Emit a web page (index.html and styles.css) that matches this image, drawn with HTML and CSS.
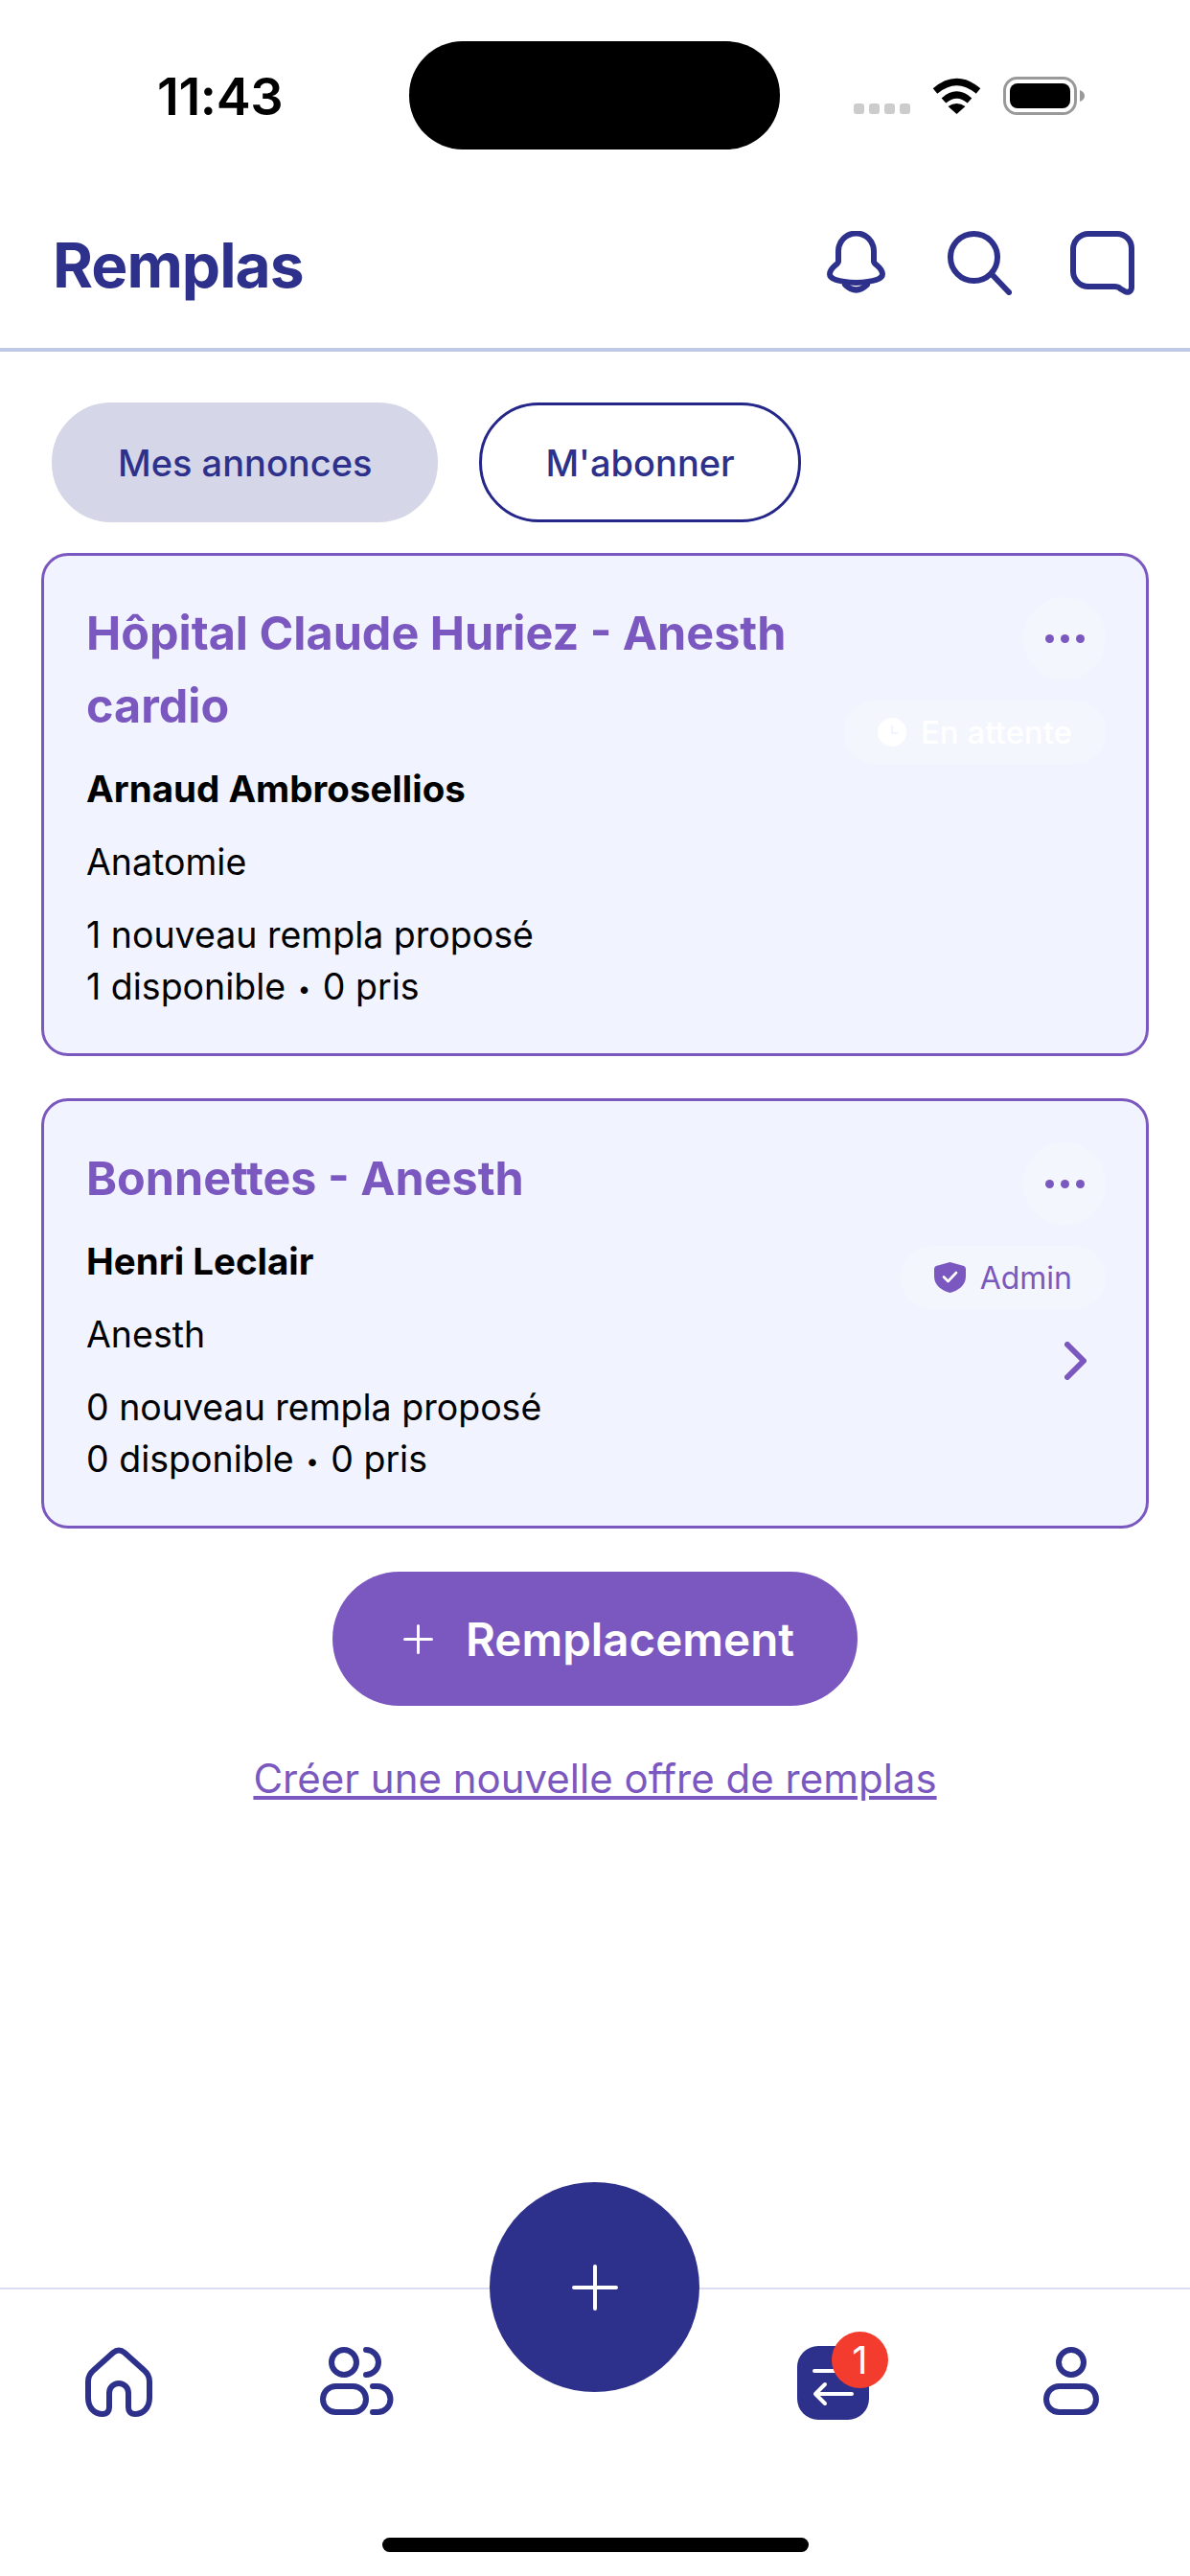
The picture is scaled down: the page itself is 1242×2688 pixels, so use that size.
FILE: index.html

```html
<!DOCTYPE html>
<html lang="fr">
<head>
    <meta charset="UTF-8">
    <meta name="viewport" content="width=device-width, initial-scale=1.0">
    <title>Remplas</title>
    <link rel="stylesheet" href="styles.css">
</head>
<body>

    <div class="statusbar">
        <span class="time">11:43</span>
        <div class="island"></div>
        <div class="signal"><i></i><i></i><i></i><i></i></div>
        <svg class="wifi" width="53" height="38" viewBox="0 0 53 38">
            <path d="M4 14 Q26.5 -5 49 14" fill="none" stroke="#000" stroke-width="7"/>
            <path d="M13 24 Q26.5 12 40 24" fill="none" stroke="#000" stroke-width="7"/>
            <path d="M17.5 30 Q26.5 24 35.5 30 L26.5 38 Z" fill="#000"/>
        </svg>
        <svg class="battery" width="85" height="40" viewBox="0 0 85 40">
            <rect x="1.5" y="1.5" width="74" height="37" rx="13" fill="#fff" stroke="#999" stroke-width="3"/>
            <rect x="7" y="7" width="63" height="26" rx="8" fill="#000"/>
            <path d="M80 14 Q85 16 85 20 Q85 24 80 26 Z" fill="#999"/>
        </svg>
    </div>

    <header class="header">
        <h1>Remplas</h1>
        <div class="header-icons">
            <svg class="bell" width="61" height="67" viewBox="0 0 61 67" fill="none" stroke="#2e318b" stroke-width="6" stroke-linecap="round">
                <path d="M12 32 V21 a18.5 18.5 0 0 1 37 0 V32 C49 35 58 38 58 45 C58 50 50 53 30.5 54 C11 53 3 50 3 45 C3 38 12 35 12 32 Z"/>
                <path d="M19 56 Q30.5 67 42 56"/>
            </svg>
            <svg width="67" height="67" viewBox="0 0 67 67" fill="none" stroke="#2e318b" stroke-width="6" stroke-linecap="round">
                <circle cx="27.5" cy="27.5" r="24.5"/>
                <path d="M46 45 L64 64"/>
            </svg>
            <svg width="67" height="67" viewBox="0 0 67 67" fill="none" stroke="#2e318b" stroke-width="6">
                <path d="M19 3 H49 A15 15 0 0 1 64 18 V59 C64 63 60 65 57 63 L52 60 Q50 58 46 58 H19 A16 16 0 0 1 3 42 V19 A16 16 0 0 1 19 3 Z"/>
            </svg>
        </div>
    </header>

    <div class="tabs">
        <button class="tab tab-active">Mes annonces</button>
        <button class="tab">M'abonner</button>
    </div>

    <div class="cards">
        <div class="card">
            <div class="card-main">
                <h2>Hôpital Claude Huriez - Anesth cardio</h2>
                <p class="name">Arnaud Ambrosellios</p>
                <p class="speciality">Anatomie</p>
                <p class="stats">1 nouveau rempla proposé<br>1 disponible <span class="sep">•</span> 0 pris</p>
            </div>
            <div class="card-side">
                <div class="more"><i></i><i></i><i></i></div>
                <div class="badge badge-pending">
                    <svg width="30" height="30" viewBox="0 0 30 30">
                        <circle cx="15" cy="15" r="15" fill="#fff"/>
                        <path d="M15 8 V16 H21" fill="none" stroke="#f1f4fe" stroke-width="2"/>
                    </svg>
                    En attente
                </div>
            </div>
        </div>

        <div class="card">
            <div class="card-main">
                <h2>Bonnettes - Anesth</h2>
                <p class="name">Henri Leclair</p>
                <p class="speciality">Anesth</p>
                <p class="stats">0 nouveau rempla proposé<br>0 disponible <span class="sep">•</span> 0 pris</p>
            </div>
            <div class="card-side">
                <div class="more"><i></i><i></i><i></i></div>
                <div class="badge">
                    <svg width="33" height="32" viewBox="0 0 33 32">
                        <path d="M16.5 0 L31 4 Q33 5 33 7 V15 C33 24 25 30 16.5 32 C8 30 0 24 0 15 V7 Q0 5 2 4 Z" fill="#7b58bf"/>
                        <path d="M10 15.5 L14.5 20 L23 11" fill="none" stroke="#fff" stroke-width="2.6" stroke-linecap="round" stroke-linejoin="round"/>
                    </svg>
                    Admin
                </div>
                <svg class="chevron" width="23" height="40" viewBox="0 0 23 40" fill="none" stroke="#7b58bf" stroke-width="6" stroke-linecap="round" stroke-linejoin="round">
                    <path d="M3 3 L20 20 L3 37"/>
                </svg>
            </div>
        </div>
    </div>

    <button class="add-btn">
        <svg width="31" height="31" viewBox="0 0 31 31" stroke="#fff" stroke-width="3" stroke-linecap="round">
            <path d="M15.5 1.5 V29.5 M1.5 15.5 H29.5"/>
        </svg>
        Remplacement
    </button>
    <a class="new-offer" href="#">Créer une nouvelle offre de remplas</a>

    <nav class="tabbar">
        <button class="fab">
            <svg width="48" height="48" viewBox="0 0 48 48" stroke="#fff" stroke-width="4" stroke-linecap="round">
                <path d="M24 2 V46 M2 24 H46"/>
            </svg>
        </button>
        <div class="tabbar-row">
            <svg width="70" height="73" viewBox="0 0 70 73" fill="none" stroke="#2e318b" stroke-width="6">
                <path d="M29 6 Q35 1 41 6 L61 24 Q67 29 67 36 V53 C67 64 60 70 52 70 C47 70 45 67 45 63 V48 A10 10 0 0 0 25 48 V63 C25 67 23 70 18 70 C10 70 3 64 3 53 V36 Q3 29 9 24 Z"/>
            </svg>
            <svg width="77" height="71" viewBox="0 0 77 71" fill="none" stroke="#2e318b" stroke-width="6" stroke-linecap="round">
                <circle cx="25" cy="16" r="13"/>
                <path d="M48 3 a13 13 0 0 1 0 26"/>
                <rect x="3" y="41" width="45" height="27" rx="13.5"/>
                <path d="M55 41 H60 a13.5 13.5 0 0 1 0 27 H55"/>
            </svg>
            <span class="tab-gap"></span>
            <div class="exchange">
                <svg width="75" height="77" viewBox="0 0 75 77">
                    <rect width="75" height="77" rx="22" fill="#2e318b"/>
                    <path d="M18 26 H60 M57 50 H19 M29 40 L19 50 L29 60" fill="none" stroke="#fff" stroke-width="4" stroke-linecap="round" stroke-linejoin="round"/>
                </svg>
                <span class="count">1</span>
            </div>
            <svg width="58" height="71" viewBox="0 0 58 71" fill="none" stroke="#2e318b" stroke-width="6">
                <circle cx="29" cy="16" r="13"/>
                <rect x="3" y="41" width="52" height="27" rx="13.5"/>
            </svg>
        </div>
        <div class="home-indicator"></div>
    </nav>

</body>
</html>
```

FILE: styles.css

```css
* {
    box-sizing: border-box;
}
body {
    margin: 0;
    height: 2688px;
    display: flex;
    flex-direction: column;
    font-family: Inter, "Liberation Sans", sans-serif;
    background: #fff;
    color: #000;
    overflow: hidden;
}
p, h1, h2 {
    margin: 0;
}
button {
    font-family: inherit;
    border: none;
    cursor: pointer;
}

.statusbar {
    height: 190px;
    display: flex;
    align-items: flex-start;
    padding: 43px 0 0 164px;
}
.time {
    width: 263px;
    margin-top: 28px;
    font-size: 54px;
    line-height: 60px;
    font-weight: 600;
    letter-spacing: -0.4px;
}
.island {
    width: 387px;
    height: 113px;
    border-radius: 56px;
    background: #000;
}
.signal {
    display: flex;
    gap: 5px;
    margin: 65px 0 0 77px;
}
.signal i {
    width: 11px;
    height: 11px;
    border-radius: 3px;
    background: #ccc;
}
.wifi {
    margin: 38px 0 0 22px;
}
.battery {
    margin: 37px 0 0 22px;
}

.header {
    height: 177px;
    display: flex;
    align-items: center;
    justify-content: space-between;
    padding: 0 58px 4px 55px;
    border-bottom: 4px solid #c0cae6;
}
.header h1 {
    margin-top: 4px;
    font-size: 64px;
    font-weight: 700;
    letter-spacing: -1px;
    color: #2e318b;
}
.header-icons {
    display: flex;
    gap: 61px;
}
.bell {
    margin-right: 4px;
}

.tabs {
    display: flex;
    gap: 43px;
    margin: 53px 0 32px 54px;
}
.tab {
    height: 125px;
    padding: 0 66px;
    border-radius: 62px;
    background: #fff;
    border: 3px solid #24268a;
    font-size: 38px;
    font-weight: 500;
    color: #2e318b;
}
.tab-active {
    background: #d5d6e8;
    border-color: #d5d6e8;
}

.cards {
    display: flex;
    flex-direction: column;
    gap: 44px;
    margin: 0 43px;
}
.card {
    display: flex;
    justify-content: space-between;
    padding: 43px 42px 42px 44px;
    background: #f1f4fe;
    border: 3px solid #7b58bf;
    border-radius: 28px;
}
.card h2 {
    font-size: 48.5px;
    line-height: 76px;
    font-weight: 650;
    color: #7b58bf;
}
.name {
    margin-top: 21px;
    font-size: 38.5px;
    line-height: 54px;
    font-weight: 700;
}
.speciality {
    margin-top: 23px;
    font-size: 37.5px;
    line-height: 54px;
}
.stats {
    margin-top: 22px;
    font-size: 37.5px;
    line-height: 54px;
}
.sep {
    font-size: 24px;
    line-height: 1;
    vertical-align: 3px;
    margin: 0 2px;
}
.card-side {
    flex: none;
    display: flex;
    flex-direction: column;
    align-items: flex-end;
    gap: 22px;
}
.more {
    width: 86px;
    height: 86px;
    display: flex;
    align-items: center;
    justify-content: center;
    gap: 7px;
    border-radius: 50%;
    background: #f4f6fe;
}
.more i {
    width: 9px;
    height: 9px;
    border-radius: 50%;
    background: #7b58bf;
}
.badge {
    height: 66px;
    display: flex;
    align-items: center;
    gap: 15px;
    padding: 0 35px;
    border-radius: 33px;
    background: #f4f6fe;
    font-size: 32px;
    color: #7b58bf;
}
.badge-pending {
    color: #fff;
    font-size: 33px;
    font-weight: 500;
}
.chevron {
    margin: 12px 20px 0 0;
}

.add-btn {
    align-self: center;
    height: 140px;
    display: flex;
    align-items: center;
    gap: 34px;
    margin-top: 45px;
    padding: 0 66px 0 74px;
    border-radius: 70px;
    background: #7b58bf;
    color: #fff;
    font-size: 47.5px;
    font-weight: 600;
}
.new-offer {
    align-self: center;
    margin-top: 50px;
    font-size: 42px;
    color: #7b58bf;
}

.tabbar {
    position: relative;
    margin-top: auto;
    height: 301px;
    border-top: 2px solid #dcdcf5;
}
.tabbar-row {
    display: grid;
    grid-template-columns: repeat(5, 1fr);
    justify-items: center;
    align-items: start;
    height: 259px;
    padding-top: 60px;
}
.fab {
    position: absolute;
    left: 511px;
    top: -112px;
    width: 219px;
    height: 219px;
    display: flex;
    align-items: center;
    justify-content: center;
    border-radius: 50%;
    background: #2e318b;
}
.exchange {
    position: relative;
    margin-top: -1px;
}
.exchange svg {
    display: block;
}
.count {
    position: absolute;
    left: 36px;
    top: -15px;
    width: 59px;
    height: 59px;
    border-radius: 50%;
    background: #f43c2e;
    color: #fff;
    font-size: 40px;
    line-height: 59px;
    text-align: center;
}
.home-indicator {
    width: 445px;
    height: 15px;
    margin: 0 auto;
    border-radius: 8px;
    background: #000;
}
```
